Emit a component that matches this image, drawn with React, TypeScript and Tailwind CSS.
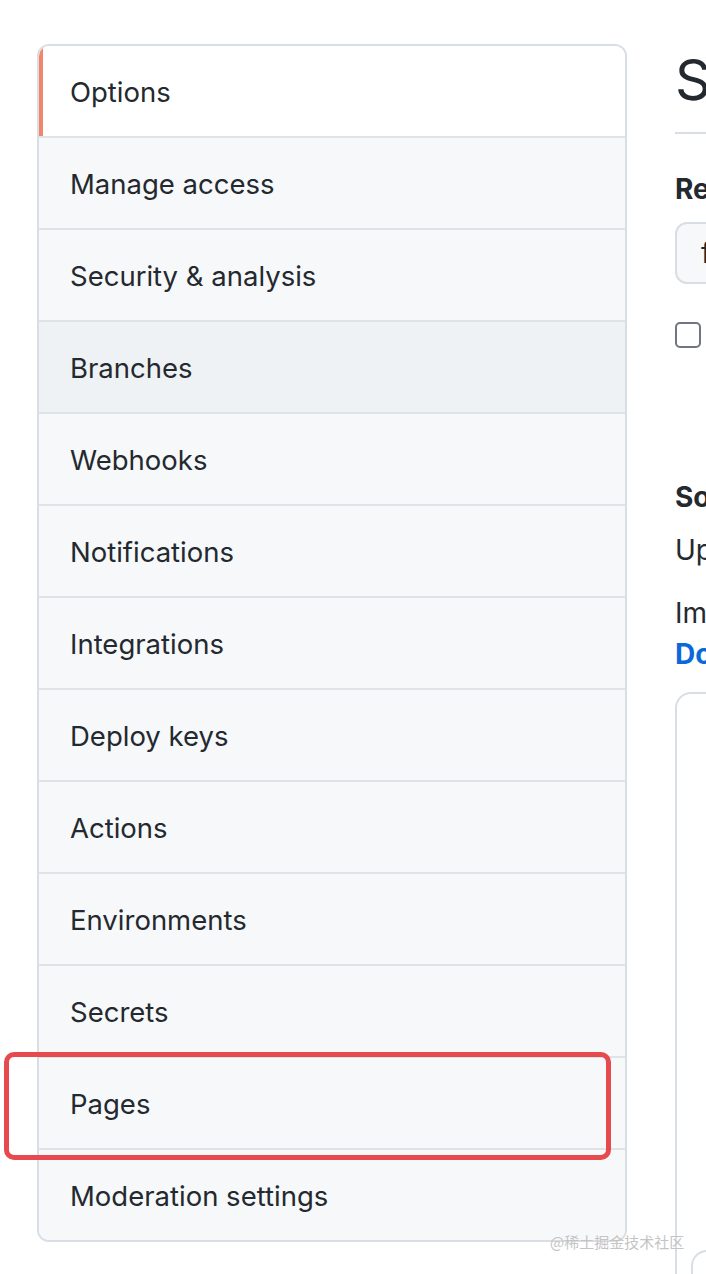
import React from 'react'

const items: { label: string; active?: boolean; hover?: boolean }[] = [
  { label: 'Options', active: true },
  { label: 'Manage access' },
  { label: 'Security & analysis' },
  { label: 'Branches', hover: true },
  { label: 'Webhooks' },
  { label: 'Notifications' },
  { label: 'Integrations' },
  { label: 'Deploy keys' },
  { label: 'Actions' },
  { label: 'Environments' },
  { label: 'Secrets' },
  { label: 'Pages' },
  { label: 'Moderation settings' },
]

const SideNav: React.FC = () => (
  <nav className="w-[590px] shrink-0 self-start rounded-[12px] border-2 border-[#d8dee4] overflow-hidden">
    {items.map((item, i) => (
      <div
        key={item.label}
        className={`relative flex items-center px-[31px] pt-[4px] text-[27.5px] text-[#24292f] ${
          i === 0 ? 'h-[90px]' : 'h-[92px] border-t-2 border-[#dfe3e8]'
        } ${item.active ? 'bg-white' : item.hover ? 'bg-[#eff2f5]' : 'bg-[#f6f8fa]'}`}
      >
        {item.active && <span className="absolute left-0 top-0 bottom-0 w-[4px] bg-[#f0876c]" />}
        {item.label}
      </div>
    ))}
  </nav>
)

const Content: React.FC = () => (
  <div className="min-w-0 flex-1 overflow-hidden whitespace-nowrap text-[#24292f]">
    <h2 className="mt-[4px] text-[56px] leading-[64px] font-normal">Settings</h2>
    <div className="mt-[20px] h-[2px] bg-[#d8dee4]" />
    <div className="mt-[39px] text-[28px] leading-[32px] font-bold">Repository name</div>
    <div className="mt-[17px] flex h-[62px] w-[600px] items-center rounded-[12px] border-2 border-[#d8dee4] bg-[#f6f8fa] px-[24px] text-[28px]">
      flutter_app
    </div>
    <div className="mt-[38px] h-[26px] w-[26px] rounded-[5px] border-2 border-[#6e7781] bg-white" />
    <div className="mt-[133px] text-[28px] leading-[32px] font-bold">Social preview</div>
    <div className="mt-[21px] text-[28px] leading-[32px]">Upload an image</div>
    <div className="mt-[31px] text-[28px] leading-[32px]">Images should be</div>
    <div className="mt-[9px] text-[28px] leading-[32px] font-bold text-[#0969da]">Download template</div>
    <div className="mt-[22px] h-[620px] w-[600px] rounded-tl-[16px] border-2 border-[#d8dee4] pt-[556px] pl-[14px]">
      <div className="h-[60px] w-[400px] rounded-tl-[16px] border-2 border-[#d8dee4]" />
    </div>
  </div>
)

export default function App() {
  return (
    <div
      className="relative h-[1274px] w-[706px] overflow-hidden bg-white"
      style={{ fontFamily: 'Inter, "Noto Sans", sans-serif' }}
    >
      <div className="flex items-start gap-[48px] pl-[37px] pt-[44px]">
        <SideNav />
        <Content />
      </div>
      <div className="absolute left-[4px] top-[1052px] h-[108px] w-[607px] rounded-[10px] border-[5px] border-[#e64a4e]" />
      <div
        className="absolute left-[550px] top-[1231px] text-[15px] text-[#c4c4c4]"
        style={{ fontFamily: '"Noto Sans CJK SC", sans-serif' }}
      >
        @稀土掘金技术社区
      </div>
    </div>
  )
}
